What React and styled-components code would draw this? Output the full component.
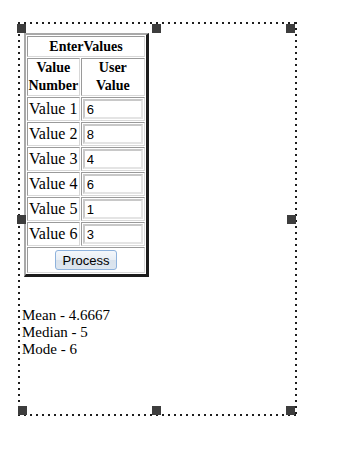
import React from "react";
import styled, { createGlobalStyle } from "styled-components";

const Global = createGlobalStyle`
  html, body { margin: 0; padding: 0; background: #fff; }
  body { font-family: "Liberation Serif", "Times New Roman", serif; color: #000; }
`;

const Page = styled.div`
  padding: 22px 0 0 18px;
`;

const dots = "#1e1e1e";

const Frame = styled.div`
  position: relative;
  box-sizing: border-box;
  width: 279px;
  height: 394px;
  padding: 11px 0 0 4px;
  background-image:
    repeating-linear-gradient(to right, ${dots} 0 2px, transparent 2px 6px),
    repeating-linear-gradient(to right, ${dots} 0 2px, transparent 2px 6px),
    repeating-linear-gradient(to bottom, ${dots} 0 2px, transparent 2px 6px),
    repeating-linear-gradient(to bottom, ${dots} 0 2px, transparent 2px 6px);
  background-size: 100% 2px, 100% 2px, 2px 100%, 2px 100%;
  background-position: 0 0, 0 100%, 0 0, 100% 0;
  background-repeat: no-repeat;
`;

const Handle = styled.span`
  position: absolute;
  width: 9px;
  height: 9px;
  background: #3d3d3d;
  left: ${(p) => p.$x}px;
  top: ${(p) => p.$y}px;
`;

const Table = styled.table`
  margin-left: 2px;
  width: 125px;
  border-collapse: separate;
  border-spacing: 1px;
  border-width: 2px 3px 3px 2px;
  border-style: solid;
  border-color: #a9a9a9 #1c1c1c #1c1c1c #a9a9a9;
  font-size: 16px;
`;

const Cell = styled.td`
  border: 1px solid;
  border-color: #9a9a9a #d8d8d8 #d8d8d8 #9a9a9a;
  padding: 1px;
  text-align: ${(p) => (p.$center ? "center" : "left")};
  white-space: nowrap;
  line-height: 18px;
`;

const Head = styled.th`
  border: 1px solid;
  border-color: #9a9a9a #d8d8d8 #d8d8d8 #9a9a9a;
  padding: ${(p) => (p.$title ? "1px 0 0" : "0")};
  font-size: 14px;
  font-weight: bold;
  line-height: 18px;
  text-align: center;
`;

const Input = styled.input`
  box-sizing: border-box;
  display: block;
  width: 60px;
  height: 20px;
  margin: 0;
  padding: 0 2px;
  border: 2px solid;
  border-color: #c8c8c8 #e4e4e4 #e4e4e4 #c8c8c8;
  font-family: "Liberation Sans", Arial, sans-serif;
  font-size: 13px;
  color: #000;
  background: #fff;
  outline: none;
`;

const Button = styled.button`
  box-sizing: border-box;
  display: block;
  width: 62px;
  height: 20px;
  margin: 1px auto;
  padding: 0;
  border: 1px solid #8eb2dc;
  border-radius: 3px;
  background: linear-gradient(#f4f7fb 0%, #e8eef5 50%, #d9e2ec 51%, #dde6ef 100%);
  font-family: "Liberation Sans", Arial, sans-serif;
  font-size: 13px;
  color: #000;
`;

const Results = styled.div`
  margin-top: 30px;
  font-size: 15px;
  line-height: 17px;
`;

const values = [6, 8, 4, 6, 1, 3];

const handles = [
  [-1, 2], [134, 2], [268, 2],
  [-1, 193], [269, 193],
  [0, 384], [134, 384], [268, 384],
];

export default function App() {
  return (
    <Page>
      <Global />
      <Frame>
        <Table>
          <tbody>
            <tr>
              <Head colSpan={2} $title>EnterValues</Head>
            </tr>
            <tr>
              <Head>Value<br />Number</Head>
              <Head>User<br />Value</Head>
            </tr>
            {values.map((v, i) => (
              <tr key={i}>
                <Cell>Value {i + 1}</Cell>
                <Cell><Input defaultValue={v} /></Cell>
              </tr>
            ))}
            <tr>
              <Cell colSpan={2} $center>
                <Button>Process</Button>
              </Cell>
            </tr>
          </tbody>
        </Table>
        <Results>
          Mean - 4.6667<br />
          Median - 5<br />
          Mode - 6
        </Results>
        {handles.map(([x, y], i) => (
          <Handle key={i} $x={x} $y={y} />
        ))}
      </Frame>
    </Page>
  );
}
